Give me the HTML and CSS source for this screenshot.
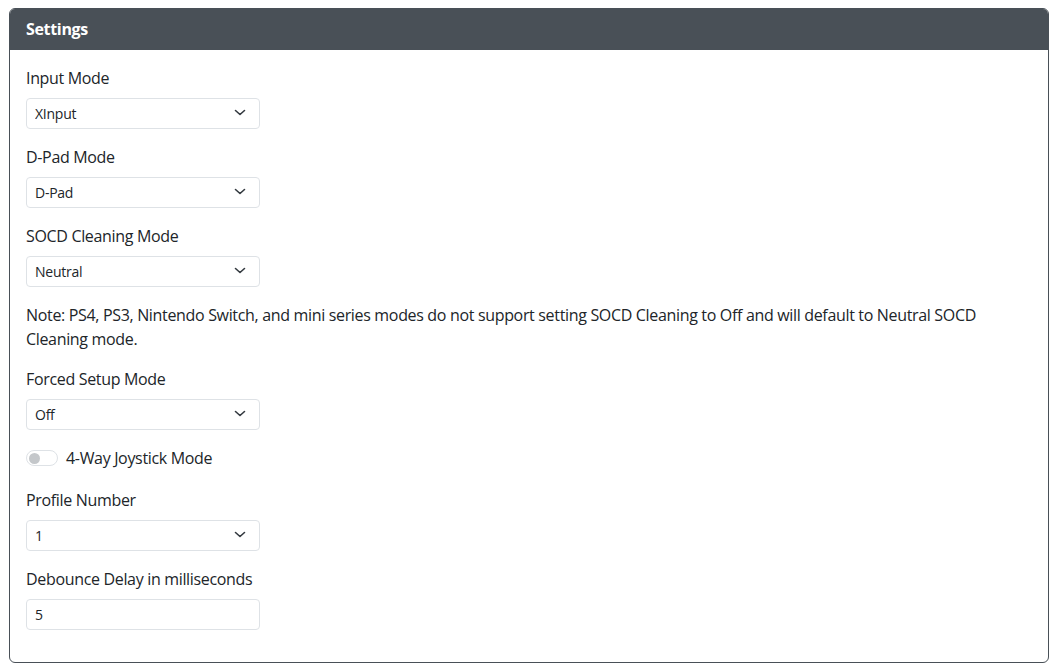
FILE: index.html
```html
<!DOCTYPE html>
<html>
<head>
<meta charset="utf-8">
<link rel="stylesheet" href="styles.css">
</head>
<body>
<div class="card">
  <div class="card-header">Settings</div>
  <div class="card-body">
    <div class="group">
      <label class="form-label">Input Mode</label>
      <div class="select-wrap">
        <select class="form-select"><option>XInput</option></select>
        <svg class="chev" viewBox="0 0 12 7" width="12" height="7"><path d="M1.5 1.5l4.5 4 4.5-4" fill="none" stroke="#343a40" stroke-width="1.6" stroke-linecap="round" stroke-linejoin="round"/></svg>
      </div>
    </div>
    <div class="group">
      <label class="form-label">D-Pad Mode</label>
      <div class="select-wrap">
        <select class="form-select"><option>D-Pad</option></select>
        <svg class="chev" viewBox="0 0 12 7" width="12" height="7"><path d="M1.5 1.5l4.5 4 4.5-4" fill="none" stroke="#343a40" stroke-width="1.6" stroke-linecap="round" stroke-linejoin="round"/></svg>
      </div>
    </div>
    <div class="group">
      <label class="form-label">SOCD Cleaning Mode</label>
      <div class="select-wrap">
        <select class="form-select"><option>Neutral</option></select>
        <svg class="chev" viewBox="0 0 12 7" width="12" height="7"><path d="M1.5 1.5l4.5 4 4.5-4" fill="none" stroke="#343a40" stroke-width="1.6" stroke-linecap="round" stroke-linejoin="round"/></svg>
      </div>
    </div>
    <p class="note">Note: PS4, PS3, Nintendo Switch, and mini series modes do not support setting SOCD Cleaning to Off and will default to Neutral SOCD Cleaning mode.</p>
    <div class="group">
      <label class="form-label">Forced Setup Mode</label>
      <div class="select-wrap">
        <select class="form-select"><option>Off</option></select>
        <svg class="chev" viewBox="0 0 12 7" width="12" height="7"><path d="M1.5 1.5l4.5 4 4.5-4" fill="none" stroke="#343a40" stroke-width="1.6" stroke-linecap="round" stroke-linejoin="round"/></svg>
      </div>
    </div>
    <div class="group switch-group">
      <label class="form-switch">
        <span class="switch"><span class="knob"></span></span>
        <span class="switch-label">4-Way Joystick Mode</span>
      </label>
    </div>
    <div class="group">
      <label class="form-label">Profile Number</label>
      <div class="select-wrap">
        <select class="form-select"><option>1</option></select>
        <svg class="chev" viewBox="0 0 12 7" width="12" height="7"><path d="M1.5 1.5l4.5 4 4.5-4" fill="none" stroke="#343a40" stroke-width="1.6" stroke-linecap="round" stroke-linejoin="round"/></svg>
      </div>
    </div>
    <div class="group">
      <label class="form-label">Debounce Delay in milliseconds</label>
      <input class="form-control" type="text" value="5">
    </div>
  </div>
</div>
</body>
</html>
```
FILE: styles.css
```css
* { box-sizing: border-box; }
html, body { margin: 0; padding: 0; background: #fff; }
body {
  padding: 8px 9px;
  font-family: "Open Sans", "Noto Sans", sans-serif;
  font-size: 16px;
  line-height: 24px;
  letter-spacing: -0.33px;
  color: #212529;
}
.card {
  border: 1px solid #495057;
  border-radius: 6px;
  overflow: hidden;
  background: #fff;
}
.card-header {
  background: #495057;
  color: #fff;
  font-weight: 700;
  padding: 8px 16px;
  border-bottom: 1px solid #495057;
}
.card-body {
  padding: 16px 16px;
}
.group { margin-bottom: 16px; }
.form-label { display: block; margin-bottom: 8px; }
.select-wrap { position: relative; width: 234px; }
.form-select, .form-control {
  display: block;
  width: 234px;
  height: 31px;
  padding: 4px 36px 4px 8px;
  font-family: inherit;
  font-size: 14px;
  line-height: 21px;
  letter-spacing: -0.25px;
  color: #212529;
  background: #fff;
  border: 1px solid #dee2e6;
  border-radius: 4px;
  appearance: none;
  -webkit-appearance: none;
  outline: none;
}
.form-control { padding-right: 8px; }
.chev {
  position: absolute;
  right: 14px;
  top: 11px;
  pointer-events: none;
}
.note { margin: 0 0 16px; }
.switch-group { margin-bottom: 18px; }
.form-switch { display: flex; align-items: center; gap: 8px; height: 24px; }
.switch {
  width: 32px;
  height: 16px;
  border: 1px solid #dee2e6;
  border-radius: 8px;
  display: flex;
  align-items: center;
  padding-left: 2px;
  background: #fff;
}
.knob {
  width: 11px;
  height: 11px;
  border-radius: 50%;
  background: #c4c7ca;
}
```
